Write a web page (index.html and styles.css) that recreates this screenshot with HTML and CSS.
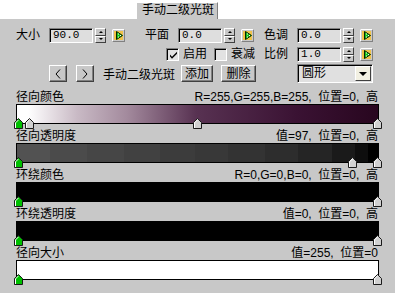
FILE: index.html
```html
<!DOCTYPE html>
<html lang="zh">

<head>
    <meta charset="UTF-8">
    <title>手动二级光斑</title>
    <link rel="stylesheet" href="styles.css">
</head>

<body>
    <!-- shared marker shapes -->
    <svg class="defs" width="0" height="0">
        <symbol id="mark-green" viewBox="0 0 9 11">
            <polygon points="0.5,10.5 0.5,4.5 4.5,0.5 8.5,4.5 8.5,10.5" fill="#00c000" stroke="#1a1a1a" />
            <polyline points="1.5,10 1.5,4.9 4.5,1.9" fill="none" stroke="#ffffff" />
        </symbol>
        <symbol id="mark-grey" viewBox="0 0 9 11">
            <polygon points="0.5,10.5 0.5,4.5 4.5,0.5 8.5,4.5 8.5,10.5" fill="#d0d0d0" stroke="#1a1a1a" />
            <polyline points="1.5,10 1.5,4.9 4.5,1.9" fill="none" stroke="#ffffff" />
        </symbol>
        <symbol id="key" viewBox="0 0 13 13">
            <rect x="0.5" y="0.5" width="12" height="12" fill="#c8c8c8" stroke="#808080" />
            <path d="M0.5 12.5V0.5H12.5" fill="none" stroke="#ffffff" />
            <rect x="2" y="2" width="9" height="9" fill="#f0c24a" />
            <path d="M4.5 2.5L10.5 6.5L4.5 10.5Z" fill="#18c018" stroke="#002800" />
            <path d="M6 5h1M6 8h1M8 6.5h1" stroke="#ffffff" />
        </symbol>
    </svg>

    <div class="tabbar">
        <div class="tab">手动二级光斑</div>
    </div>

    <div class="panel">
        <div class="row">
            <div class="field f1">
                <span class="lbl">大小</span>
                <span class="num">90.0</span>
                <span class="spin"><i class="up"></i><i class="down"></i></span>
                <svg class="key"><use href="#key" /></svg>
            </div>
            <div class="field f2">
                <span class="lbl">平面</span>
                <span class="num">0.0</span>
                <span class="spin"><i class="up"></i><i class="down"></i></span>
                <svg class="key"><use href="#key" /></svg>
            </div>
            <div class="field">
                <span class="lbl">色调</span>
                <span class="num">0.0</span>
                <span class="spin"><i class="up"></i><i class="down"></i></span>
                <svg class="key"><use href="#key" /></svg>
            </div>
        </div>

        <div class="row row-checks">
            <label class="check c1">
                <span class="box">
                    <svg width="9" height="9" viewBox="0 0 9 9"><path d="M1 3.5l2 2.2 5-5v2l-5 5-2-2.2z" fill="#000" /></svg>
                </span>启用
            </label>
            <label class="check c2"><span class="box"></span>衰减</label>
            <div class="field">
                <span class="lbl">比例</span>
                <span class="num">1.0</span>
                <span class="spin"><i class="up"></i><i class="down"></i></span>
                <svg class="key"><use href="#key" /></svg>
            </div>
        </div>

        <div class="row row-nav">
            <button class="btn arrow">
                <svg width="6" height="10" viewBox="0 0 6 10"><polyline points="5,0.5 1,5 5,9.5" fill="none" stroke="#000" /></svg>
            </button>
            <button class="btn arrow next">
                <svg width="6" height="10" viewBox="0 0 6 10"><polyline points="1,0.5 5,5 1,9.5" fill="none" stroke="#000" /></svg>
            </button>
            <span class="nav-name">手动二级光斑</span>
            <button class="btn add">添加</button>
            <button class="btn del">删除</button>
            <div class="combo">
                <span class="combo-text">圆形</span>
                <span class="combo-btn"><i></i></span>
            </div>
        </div>

        <div class="tracks">
            <div class="track">
                <div class="track-head"><span>径向颜色</span><span>R=255,G=255,B=255,&nbsp; 位置=0,&nbsp; 高</span></div>
                <div class="bar bar-color">
                    <svg class="mark" style="left:-3px"><use href="#mark-green" /></svg>
                    <svg class="mark" style="left:8px"><use href="#mark-grey" /></svg>
                    <svg class="mark" style="left:176px"><use href="#mark-grey" /></svg>
                    <svg class="mark" style="left:356px"><use href="#mark-grey" /></svg>
                </div>
            </div>
            <div class="track">
                <div class="track-head"><span>径向透明度</span><span>值=97,&nbsp; 位置=0,&nbsp; 高</span></div>
                <div class="bar bar-alpha">
                    <svg class="mark" style="left:-3px"><use href="#mark-green" /></svg>
                    <svg class="mark" style="left:331px"><use href="#mark-grey" /></svg>
                    <svg class="mark" style="left:356px"><use href="#mark-grey" /></svg>
                </div>
            </div>
            <div class="track">
                <div class="track-head"><span>环绕颜色</span><span>R=0,G=0,B=0,&nbsp; 位置=0,&nbsp; 高</span></div>
                <div class="bar bar-black">
                    <svg class="mark" style="left:-3px"><use href="#mark-green" /></svg>
                    <svg class="mark" style="left:356px"><use href="#mark-grey" /></svg>
                </div>
            </div>
            <div class="track">
                <div class="track-head"><span>环绕透明度</span><span>值=0,&nbsp; 位置=0,&nbsp; 高</span></div>
                <div class="bar bar-black">
                    <svg class="mark" style="left:-3px"><use href="#mark-green" /></svg>
                    <svg class="mark" style="left:356px"><use href="#mark-grey" /></svg>
                </div>
            </div>
            <div class="track">
                <div class="track-head"><span>径向大小</span><span>值=255,&nbsp; 位置=0</span></div>
                <div class="bar bar-white">
                    <svg class="mark" style="left:-3px"><use href="#mark-green" /></svg>
                    <svg class="mark" style="left:356px"><use href="#mark-grey" /></svg>
                </div>
            </div>
        </div>
    </div>
</body>

</html>
```

FILE: styles.css
```css
body {
    margin: 0;
    background: #ffffff;
    font-family: "Liberation Sans", "Noto Sans CJK SC", sans-serif;
    font-size: 12px;
    color: #000;
}

.defs {
    position: absolute;
    width: 0;
    height: 0;
}

/* tab strip */
.tabbar {
    height: 19px;
    padding: 2px 0 0 136px;
    box-sizing: border-box;
    display: flex;
}

.tab {
    width: 82px;
    height: 17px;
    box-sizing: border-box;
    background: #c8c8c8;
    border-top: 1px solid #ffffff;
    border-left: 1px solid #ffffff;
    border-right: 1px solid #808080;
    padding-left: 5px;
    line-height: 15px;
}

.panel {
    background: #c8c8c8;
    height: 274px;
    padding-top: 9px;
    box-sizing: border-box;
}

/* spinner rows */
.row {
    display: flex;
    align-items: center;
    height: 15px;
    padding-left: 16px;
}

.row-checks {
    margin-top: 4px;
    padding-left: 166px;
}

.field {
    display: flex;
    align-items: center;
}

.f1 {
    width: 129px;
}

.f2 {
    width: 119px;
}

.lbl {
    width: 33px;
    line-height: 15px;
}

.num {
    width: 44px;
    height: 15px;
    box-sizing: border-box;
    background: #dedede;
    border: 1px solid;
    border-color: #808080 #ffffff #ffffff #808080;
    box-shadow: inset 1px 1px #000;
    padding-left: 3px;
    font-family: "Liberation Mono", monospace;
    font-size: 11px;
    line-height: 13px;
}

.spin {
    width: 11px;
    height: 15px;
    margin-left: 2px;
    display: flex;
    flex-direction: column;
}

.spin i {
    flex: 1;
    box-sizing: border-box;
    border: 1px solid;
    border-color: #ffffff #404040 #404040 #ffffff;
    background: #c8c8c8;
    display: flex;
    align-items: center;
    justify-content: center;
}

.spin i::after {
    content: "";
    width: 0;
    height: 0;
    border-left: 2px solid transparent;
    border-right: 2px solid transparent;
}

.spin .up::after {
    border-bottom: 2px solid #000;
}

.spin .down::after {
    border-top: 2px solid #000;
}

.key {
    width: 13px;
    height: 13px;
    margin-left: 6px;
}

/* checkboxes */
.check {
    display: flex;
    align-items: center;
    line-height: 15px;
}

.box {
    width: 13px;
    height: 13px;
    box-sizing: border-box;
    margin-right: 4px;
    background: #e2e2e2;
    border: 1px solid;
    border-color: #808080 #ffffff #ffffff #808080;
    box-shadow: inset 1px 1px #000;
    display: flex;
    align-items: center;
    justify-content: center;
}

.box svg {
    margin: 1px 0 0 1px;
}

.c1 {
    margin-right: 7px;
}

.c2 {
    margin-right: 9px;
}

/* navigation row */
.row-nav {
    height: 19px;
    margin-top: 2px;
    padding-left: 49px;
}

.btn {
    height: 17px;
    margin: 0;
    padding: 0;
    box-sizing: border-box;
    background: #c8c8c8;
    border: 1px solid;
    border-color: #ffffff #404040 #404040 #ffffff;
    box-shadow: inset -1px -1px #808080;
    font: inherit;
    color: #000;
    line-height: 14px;
    display: flex;
    align-items: center;
    justify-content: center;
}

.arrow {
    width: 18px;
}

.next {
    margin-left: 9px;
}

.nav-name {
    margin-left: 9px;
    width: 72px;
}

.add {
    width: 32px;
    margin-left: 6px;
}

.del {
    width: 35px;
    margin-left: 8px;
}

.combo {
    width: 76px;
    height: 19px;
    margin-left: 41px;
    box-sizing: border-box;
    display: flex;
    align-items: center;
    justify-content: space-between;
    background: #e0e0e0;
    border: 1px solid;
    border-color: #808080 #ffffff #ffffff #808080;
    box-shadow: inset 1px 1px #000;
}

.combo-text {
    padding-left: 4px;
    line-height: 15px;
}

.combo-btn {
    width: 16px;
    height: 15px;
    margin-right: 1px;
    box-sizing: border-box;
    background: #f2f0e2;
    border: 1px solid;
    border-color: #ffffff #404040 #404040 #ffffff;
    display: flex;
    align-items: center;
    justify-content: center;
}

.combo-btn i {
    width: 0;
    height: 0;
    border-left: 4px solid transparent;
    border-right: 4px solid transparent;
    border-top: 4px solid #000;
}

/* gradient tracks */
.tracks {
    margin-top: 7px;
    padding-left: 16px;
}

.track {
    width: 363px;
    margin-bottom: 5px;
}

.track-head {
    display: flex;
    justify-content: space-between;
    height: 14px;
    line-height: 14px;
    padding-right: 1px;
    white-space: nowrap;
}

.bar {
    position: relative;
    height: 20px;
    box-sizing: border-box;
    border: 1px solid #000;
}

.bar-color {
    background: linear-gradient(to right, #ffffff 0, #ffffff 11px, #c9bac5 60px, #a38a9d 110px, #583252 179px, #3a1233 280px, #28061f 100%);
}

.bar-alpha {
    background: linear-gradient(to right,
            #525252 0, #525252 33px, #4b4b4b 33px, #4b4b4b 70px,
            #464646 70px, #464646 107px, #414141 107px, #414141 143px,
            #3c3c3c 143px, #3c3c3c 178px, #383838 178px, #383838 211px,
            #333333 211px, #333333 248px, #2d2d2d 248px, #2d2d2d 281px,
            #252525 281px, #252525 315px, #1a1a1a 315px, #1a1a1a 338px,
            #0e0e0e 338px, #0e0e0e 351px, #000000 351px);
}

.bar-black {
    background: #000;
}

.bar-white {
    background: #ffffff;
}

.mark {
    position: absolute;
    top: 13px;
    width: 9px;
    height: 11px;
    z-index: 1;
}
```
